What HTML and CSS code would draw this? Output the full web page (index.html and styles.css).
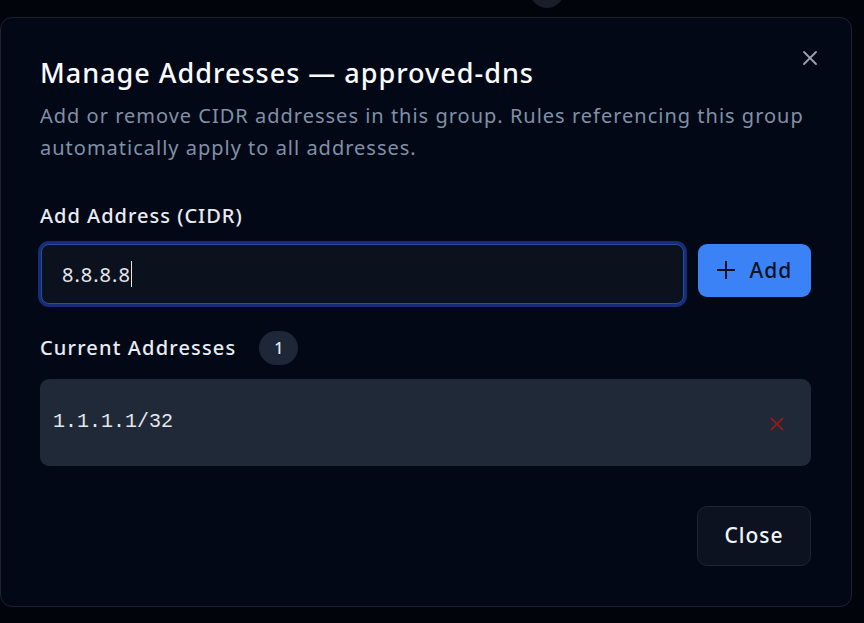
FILE: index.html
```html
<!DOCTYPE html>
<html>
<head>
<meta charset="utf-8">
<link rel="stylesheet" href="styles.css">
</head>
<body>
<div class="backdrop-dot"></div>
<div class="page">
  <div class="modal">
    <button class="close-x" aria-label="Close">
      <svg width="16" height="16" viewBox="0 0 16 16"><path d="M2 2L14 14M14 2L2 14" stroke="#9ca3af" stroke-width="1.8" stroke-linecap="round"/></svg>
    </button>
    <h2 class="title">Manage Addresses — approved-dns</h2>
    <p class="desc">Add or remove CIDR addresses in this group. Rules referencing this group automatically apply to all addresses.</p>

    <label class="label">Add Address (CIDR)</label>
    <div class="add-row">
      <div class="input"><span>8.8.8.8</span><span class="caret"></span></div>
      <button class="btn-add">
        <svg width="18" height="20" viewBox="0 0 18 20"><path d="M9 1V19M0 10H18" stroke="#0b1220" stroke-width="2"/></svg>
        <span>Add</span>
      </button>
    </div>

    <div class="current">
      <span class="label-inline">Current Addresses</span>
      <span class="badge">1</span>
    </div>
    <div class="list">
      <div class="item">
        <span class="addr">1.1.1.1/32</span>
        <svg class="del" width="16" height="16" viewBox="0 0 16 16"><path d="M2 2L14 14M14 2L2 14" stroke="#8b1c1c" stroke-width="2"/></svg>
      </div>
    </div>

    <div class="footer">
      <button class="btn-close">Close</button>
    </div>
  </div>
</div>
</body>
</html>
```
FILE: styles.css
```css
* { box-sizing: border-box; }
html, body { margin: 0; padding: 0; }
body {
  background: #02040b;
  font-family: "Noto Sans", "Open Sans", sans-serif;
  color: #f1f5f9;
  width: 864px;
  height: 623px;
  overflow: hidden;
  position: relative;
}
.backdrop-dot {
  position: absolute;
  left: 530px;
  top: -26px;
  width: 34px;
  height: 34px;
  border-radius: 50%;
  background: #1a1e29;
}
.page {
  padding-top: 17px;
  position: relative;
}
.modal {
  position: relative;
  width: 852px;
  height: 590px;
  background: #030817;
  border: 1px solid #1c2232;
  border-radius: 12px;
  padding: 37px 40px 40px 39px;
  display: flex;
  flex-direction: column;
}
.close-x {
  position: absolute;
  right: 32px;
  top: 31px;
  background: none;
  border: 0;
  padding: 0;
  width: 18px;
  height: 18px;
  display: flex;
  align-items: center;
  justify-content: center;
}
.title {
  margin: 0;
  font-size: 27px;
  font-weight: 500;
  line-height: 36px;
  letter-spacing: 1px;
  color: #f8fafc;
}
.desc {
  margin: 9px 0 0;
  font-size: 20px;
  line-height: 32px;
  letter-spacing: 1px;
  color: #8090a6;
}
.label {
  margin-top: 38px;
  font-size: 20px;
  font-weight: 500;
  letter-spacing: 1px;
  line-height: 28px;
  color: #e8ecf2;
}
.add-row {
  margin-top: 12px;
  display: flex;
  gap: 14px;
  align-items: flex-start;
}
.input {
  flex: 1;
  height: 60px;
  margin: 2px 0 0 1px;
  background: #0c111e;
  border: 1px solid #2a4aa8;
  border-radius: 8px;
  box-shadow: 0 0 0 3px #162e78;
  display: flex;
  align-items: center;
  padding-left: 20px;
  font-size: 20px;
  letter-spacing: 1px;
  color: #e5e7eb;
}
.caret {
  display: inline-block;
  width: 1.5px;
  height: 26px;
  background: #e5e7eb;
}
.btn-add {
  width: 113px;
  height: 53px;
  background: #3b82f6;
  border: 0;
  border-radius: 9px;
  display: flex;
  align-items: center;
  justify-content: center;
  gap: 15px;
  font-family: inherit;
  font-size: 21px;
  font-weight: 500;
  letter-spacing: 1px;
  color: #0b1220;
  padding: 0 0 1px;
  margin-top: 2px;
}
.current {
  margin-top: 27px;
  display: flex;
  align-items: center;
  gap: 23px;
}
.label-inline {
  font-size: 20px;
  font-weight: 500;
  letter-spacing: 1.15px;
  line-height: 28px;
  color: #e8ecf2;
}
.badge {
  width: 39px;
  height: 34px;
  border-radius: 17px;
  background: #1e2738;
  display: flex;
  align-items: center;
  justify-content: center;
  font-size: 16px;
  font-weight: 500;
  color: #e5e7eb;
}
.list {
  margin-top: 14px;
}
.item {
  height: 87px;
  background: #1f2938;
  border-radius: 9px;
  display: flex;
  align-items: center;
  justify-content: space-between;
  padding: 0 26px 0 13px;
}
.addr {
  font-family: "Liberation Mono", monospace;
  font-size: 20px;
  color: #e5e7eb;
  margin-top: -3px;
}
.del {
  margin-top: 2px;
}
.footer {
  margin-top: auto;
  display: flex;
  justify-content: flex-end;
}
.btn-close {
  width: 114px;
  height: 60px;
  background: #0c121f;
  border: 1px solid #1e2533;
  border-radius: 10px;
  font-family: inherit;
  font-size: 21px;
  font-weight: 500;
  letter-spacing: 1px;
  color: #f1f5f9;
  padding: 0 0 3px;
}
```
